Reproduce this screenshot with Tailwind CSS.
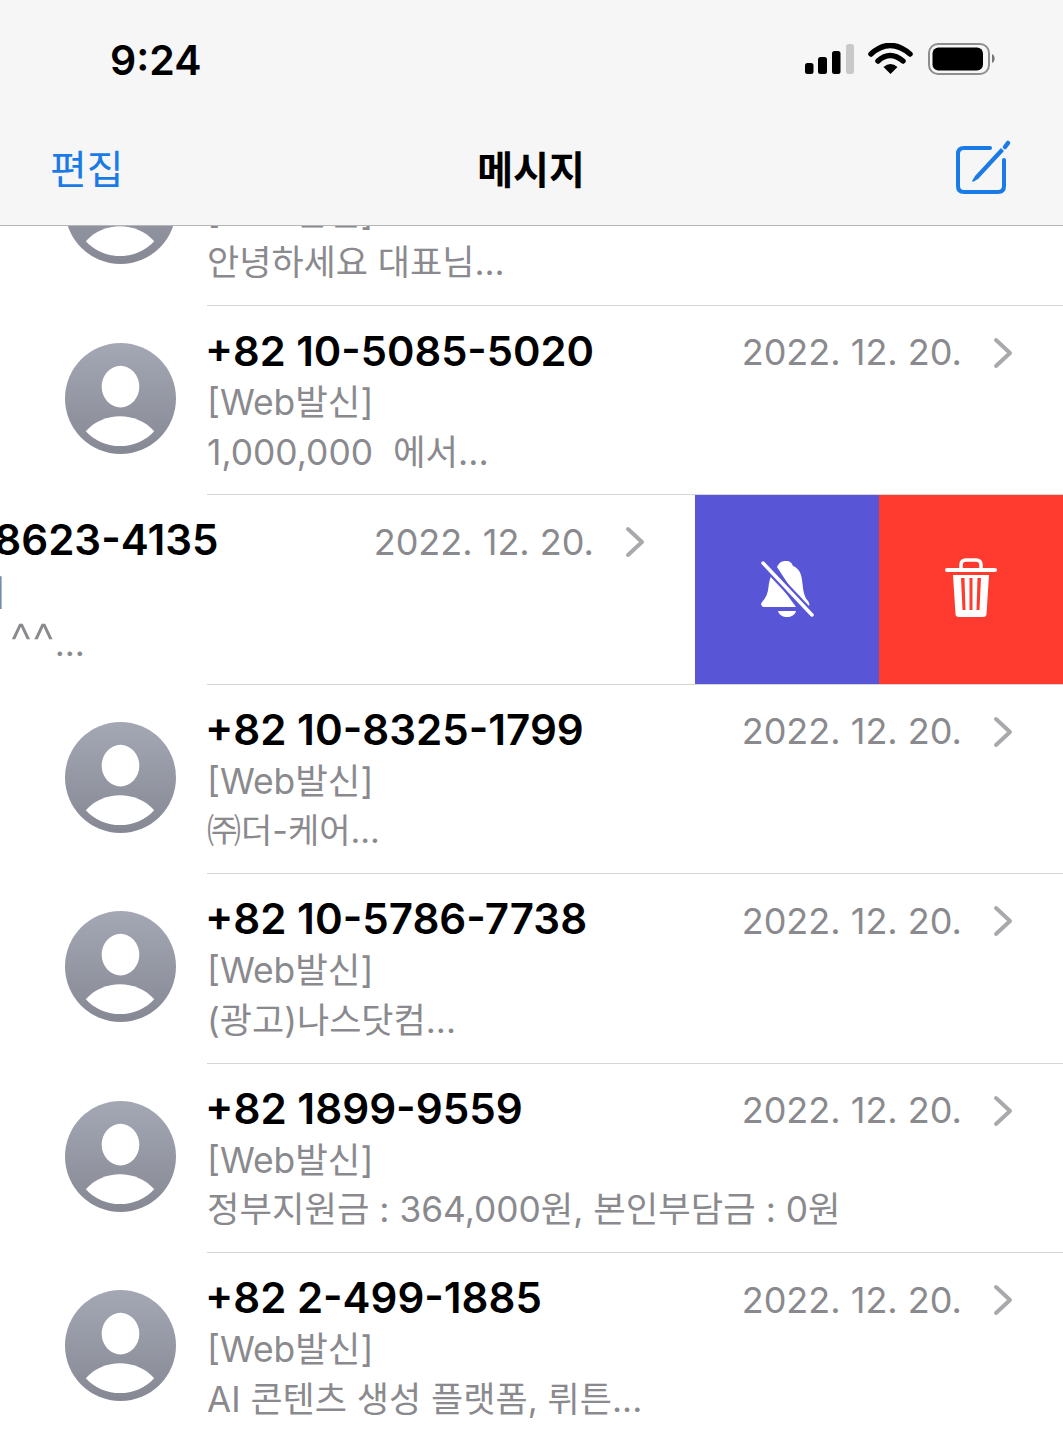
<!doctype html>
<html lang="ko">
  <head>
    <meta charset="UTF-8" />
    <title>메시지</title>
    <script src="https://cdn.jsdelivr.net/npm/@tailwindcss/browser@4"></script>
  </head>
  <body class="bg-white font-['Inter','Noto_Sans_CJK_KR',sans-serif] overflow-hidden">
    <div class="relative w-[1063px] h-[1440px] overflow-hidden">
      <!-- nav -->
      <header class="relative z-10 h-[226px] bg-[#f6f6f6] border-b border-[#b5b5b7]">
        <div class="flex items-start h-[114px] pl-[110px]">
          <span class="mt-[33px] text-[41px] leading-[54px] font-semibold text-black">9:24</span>
          <svg class="ml-auto mt-[43px] mr-[68px]" width="190" height="33" viewBox="0 0 190 33">
            <rect x="0" y="20" width="8.5" height="11" rx="2.5" fill="#000" />
            <rect x="13" y="14" width="9" height="17" rx="2.5" fill="#000" />
            <rect x="27" y="8" width="8.5" height="23" rx="2.5" fill="#000" />
            <rect x="41" y="1" width="8" height="30" rx="2.5" fill="#c9c9c9" />
            <path d="M66 11 Q85 -6 105 11" fill="none" stroke="#000" stroke-width="5.5" stroke-linecap="round" />
            <path d="M73 18 Q85 7 98 18" fill="none" stroke="#000" stroke-width="5.5" stroke-linecap="round" />
            <path d="M78.5 24 Q85.5 18 92.5 24 L85.5 31 Z" fill="#000" />
            <rect x="124" y="1" width="60" height="30" rx="9" fill="none" stroke="#8e8e8e" stroke-width="2" />
            <rect x="127.5" y="4.5" width="50.5" height="23" rx="6" fill="#000" />
            <path d="M187 11 C190.5 12 190.5 19 187 20 Z" fill="#777779" />
          </svg>
        </div>
        <div class="flex items-center h-[111px] pl-[50px] pr-[50px]">
          <span class="w-[200px] text-[40px] leading-[50px] text-[#1a7ae6]">편집</span>
          <span class="flex-1 pr-[39px] text-center text-[39px] leading-[50px] font-semibold text-black">메시지</span>
          <svg class="w-[200px] -mt-[2px] -mr-[38px]" width="200" height="60" viewBox="0 0 200 60">
            <path d="M139 9 H113 Q107 9 107 15 V47 Q107 53 113 53 H147 Q153 53 153 47 V21" fill="none" stroke="#1a7ae6" stroke-width="4" stroke-linecap="round" />
            <path d="M125 37 L122 42 L127 39 L152 12 L150 10 Z" fill="#1a7ae6" stroke="#1a7ae6" stroke-width="1.5" stroke-linejoin="round" />
            <path d="M154 8 L157 4" stroke="#1a7ae6" stroke-width="4.5" stroke-linecap="round" />
          </svg>
        </div>
      </header>

      <main class="-mt-[110.5px]">
        <!-- row 0 -->
        <section class="flex h-[189px] pl-[65px]">
          <svg class="mt-[37px] shrink-0" width="111" height="111" viewBox="0 0 112 112">
            <defs>
              <linearGradient id="av" x1="0" y1="0" x2="0" y2="1">
                <stop offset="0" stop-color="#a4a8b4" />
                <stop offset="1" stop-color="#868994" />
              </linearGradient>
            </defs>
            <circle cx="56" cy="56" r="56" fill="url(#av)" />
            <ellipse cx="56" cy="44" rx="19" ry="21" fill="#fff" />
            <path d="M21 89 C30 79 43 74 55.5 74 C68 74 81 79 90 89 C81 99 68 104 55.5 104 C43 104 30 99 21 89 Z" fill="#fff" />
          </svg>
          <div class="ml-[31px] flex-1 pt-[19px]">
            <div class="h-[52px]"></div>
            <p class="h-[50px] pt-px text-[35.4px] leading-[50px] text-[#8a8a8e]">[Web발신]</p>
            <p class="h-[50px] text-[35px] leading-[50px] text-[#8a8a8e]">안녕하세요 대표님...</p>
          </div>
        </section>
        <div class="ml-[207px] h-px bg-[#d6d6d8]"></div>

        <!-- row 1 -->
        <section class="flex h-[188.5px] pl-[65px]">
          <svg class="mt-[37px] shrink-0" width="111" height="111" viewBox="0 0 112 112">
            <circle cx="56" cy="56" r="56" fill="url(#av)" />
            <ellipse cx="56" cy="44" rx="19" ry="21" fill="#fff" />
            <path d="M21 89 C30 79 43 74 55.5 74 C68 74 81 79 90 89 C81 99 68 104 55.5 104 C43 104 30 99 21 89 Z" fill="#fff" />
          </svg>
          <div class="ml-[31px] flex-1 pt-[19px]">
            <div class="flex items-center h-[52px]">
              <h2 class="flex-1 -ml-[2px] text-[41.7px] leading-[50px] font-semibold text-black">+82 10-5085-5020</h2>
              <time class="mt-[3px] text-[36px] text-[#8a8a8e]">2022. 12. 20.</time>
              <svg class="mt-[4px] ml-[31px] mr-[49px]" width="21" height="32" viewBox="0 0 21 32"><path d="M3 3 L17 16 L3 29" fill="none" stroke="#a9a9ad" stroke-width="4" stroke-linecap="round" stroke-linejoin="round" /></svg>
            </div>
            <p class="h-[50px] pt-px text-[35.4px] leading-[50px] text-[#8a8a8e]">[Web발신]</p>
            <p class="h-[50px] pt-px text-[35.4px] leading-[50px] text-[#8a8a8e]">1,000,000&nbsp; 에서...</p>
          </div>
        </section>
        <div class="ml-[207px] h-px bg-[#d6d6d8]"></div>

        <!-- row 2: swiped open -->
        <section class="h-[188.5px] overflow-hidden">
          <div class="flex w-[1431px] h-full -ml-[368px]">
            <div class="flex w-[1063px] pl-[65px]">
              <svg class="mt-[37px] shrink-0" width="111" height="111" viewBox="0 0 112 112">
                <circle cx="56" cy="56" r="56" fill="url(#av)" />
                <ellipse cx="56" cy="44" rx="19" ry="21" fill="#fff" />
                <path d="M21 89 C30 79 43 74 55.5 74 C68 74 81 79 90 89 C81 99 68 104 55.5 104 C43 104 30 99 21 89 Z" fill="#fff" />
              </svg>
              <div class="ml-[31px] flex-1 pt-[19px]">
                <div class="flex items-center h-[52px]">
                  <h2 class="flex-1 -ml-[2px] text-[42.1px] leading-[52px] font-semibold text-black">+82 10-8623-4135</h2>
                  <time class="mt-[3px] text-[36px] text-[#8a8a8e]">2022. 12. 20.</time>
                  <svg class="mt-[4px] ml-[31px] mr-[49px]" width="21" height="32" viewBox="0 0 21 32"><path d="M3 3 L17 16 L3 29" fill="none" stroke="#a9a9ad" stroke-width="4" stroke-linecap="round" stroke-linejoin="round" /></svg>
                </div>
                <p class="h-[50px] pt-px text-[35.4px] leading-[50px] text-[#8a8a8e]">[Web발신]</p>
                <p class="h-[50px] text-[35px] leading-[50px] text-[#8a8a8e]">안녕하세요 <span class="text-[50px] leading-none font-light align-[-3px]">^^</span>...</p>
              </div>
            </div>
            <div class="flex items-center justify-center w-[184px] bg-[#5856d6]">
              <svg width="54" height="58" viewBox="0 0 54 58" fill="#fff">
                <path d="M26 1 C21 1 19 3 17 7 L32 30 L47 46 C50 47 50 44 48 41 C43 36 43 26 42 20 C41 12 38 8 33 6 C32 3 30 1 26 1 Z" />
                <path d="M12 14 C10 18 9 22 8.5 27 C8 33 6 38 2 42 C0 45 2 47 4 47 L36 47 Z" />
                <path d="M18 51 H36 C35 55 31 57 27 57 C23 57 19 55 18 51 Z" />
                <path d="M3 3 L52 55" stroke="#5856d6" stroke-width="8" />
                <path d="M3 3 L52 55" stroke="#fff" stroke-width="3.5" stroke-linecap="round" />
              </svg>
            </div>
            <div class="flex items-center justify-center w-[184px] bg-[#ff3b30]">
              <svg class="-mt-[3px]" width="54" height="60" viewBox="0 0 54 60" fill="#fff">
                <path d="M17 12 V7 Q17 2 22 2 H32 Q37 2 37 7 V12" fill="none" stroke="#fff" stroke-width="3.5" />
                <rect x="1" y="10" width="52" height="4" rx="2" />
                <path fill-rule="evenodd" d="M9 17 H45 L42.5 56 Q42.3 59 39 59 H15 Q11.7 59 11.5 56 Z M17 20 L18.5 52 H21.5 L20.5 20 Z M25.5 20 V52 H28.5 V20 Z M33.5 20 L32.5 52 H35.5 L37 20 Z" />
              </svg>
            </div>
          </div>
        </section>
        <div class="ml-[207px] h-px bg-[#d6d6d8]"></div>

        <!-- row 3 -->
        <section class="flex h-[188.5px] pl-[65px]">
          <svg class="mt-[37px] shrink-0" width="111" height="111" viewBox="0 0 112 112">
            <circle cx="56" cy="56" r="56" fill="url(#av)" />
            <ellipse cx="56" cy="44" rx="19" ry="21" fill="#fff" />
            <path d="M21 89 C30 79 43 74 55.5 74 C68 74 81 79 90 89 C81 99 68 104 55.5 104 C43 104 30 99 21 89 Z" fill="#fff" />
          </svg>
          <div class="ml-[31px] flex-1 pt-[19px]">
            <div class="flex items-center h-[52px]">
              <h2 class="flex-1 -ml-[2px] text-[42.1px] leading-[52px] font-semibold text-black">+82 10-8325-1799</h2>
              <time class="mt-[3px] text-[36px] text-[#8a8a8e]">2022. 12. 20.</time>
              <svg class="mt-[4px] ml-[31px] mr-[49px]" width="21" height="32" viewBox="0 0 21 32"><path d="M3 3 L17 16 L3 29" fill="none" stroke="#a9a9ad" stroke-width="4" stroke-linecap="round" stroke-linejoin="round" /></svg>
            </div>
            <p class="h-[50px] pt-px text-[35.4px] leading-[50px] text-[#8a8a8e]">[Web발신]</p>
            <p class="h-[50px] text-[34px] leading-[50px] text-[#8a8a8e]">㈜더-케어...</p>
          </div>
        </section>
        <div class="ml-[207px] h-px bg-[#d6d6d8]"></div>

        <!-- row 4 -->
        <section class="flex h-[188.5px] pl-[65px]">
          <svg class="mt-[37px] shrink-0" width="111" height="111" viewBox="0 0 112 112">
            <circle cx="56" cy="56" r="56" fill="url(#av)" />
            <ellipse cx="56" cy="44" rx="19" ry="21" fill="#fff" />
            <path d="M21 89 C30 79 43 74 55.5 74 C68 74 81 79 90 89 C81 99 68 104 55.5 104 C43 104 30 99 21 89 Z" fill="#fff" />
          </svg>
          <div class="ml-[31px] flex-1 pt-[19px]">
            <div class="flex items-center h-[52px]">
              <h2 class="flex-1 -ml-[2px] text-[42.1px] leading-[52px] font-semibold text-black">+82 10-5786-7738</h2>
              <time class="mt-[3px] text-[36px] text-[#8a8a8e]">2022. 12. 20.</time>
              <svg class="mt-[4px] ml-[31px] mr-[49px]" width="21" height="32" viewBox="0 0 21 32"><path d="M3 3 L17 16 L3 29" fill="none" stroke="#a9a9ad" stroke-width="4" stroke-linecap="round" stroke-linejoin="round" /></svg>
            </div>
            <p class="h-[50px] pt-px text-[35.4px] leading-[50px] text-[#8a8a8e]">[Web발신]</p>
            <p class="h-[50px] text-[35px] leading-[50px] text-[#8a8a8e]">(광고)나스닷컴...</p>
          </div>
        </section>
        <div class="ml-[207px] h-px bg-[#d6d6d8]"></div>

        <!-- row 5 -->
        <section class="flex h-[188.5px] pl-[65px]">
          <svg class="mt-[37px] shrink-0" width="111" height="111" viewBox="0 0 112 112">
            <circle cx="56" cy="56" r="56" fill="url(#av)" />
            <ellipse cx="56" cy="44" rx="19" ry="21" fill="#fff" />
            <path d="M21 89 C30 79 43 74 55.5 74 C68 74 81 79 90 89 C81 99 68 104 55.5 104 C43 104 30 99 21 89 Z" fill="#fff" />
          </svg>
          <div class="ml-[31px] flex-1 pt-[19px]">
            <div class="flex items-center h-[52px]">
              <h2 class="flex-1 -ml-[2px] text-[42.2px] leading-[52px] font-semibold text-black">+82 1899-9559</h2>
              <time class="mt-[3px] text-[36px] text-[#8a8a8e]">2022. 12. 20.</time>
              <svg class="mt-[4px] ml-[31px] mr-[49px]" width="21" height="32" viewBox="0 0 21 32"><path d="M3 3 L17 16 L3 29" fill="none" stroke="#a9a9ad" stroke-width="4" stroke-linecap="round" stroke-linejoin="round" /></svg>
            </div>
            <p class="h-[50px] pt-px text-[35.4px] leading-[50px] text-[#8a8a8e]">[Web발신]</p>
            <p class="h-[50px] text-[35.3px] leading-[50px] text-[#8a8a8e]">정부지원금 : 364,000원, 본인부담금 : 0원</p>
          </div>
        </section>
        <div class="ml-[207px] h-px bg-[#d6d6d8]"></div>

        <!-- row 6 -->
        <section class="flex h-[188.5px] pl-[65px]">
          <svg class="mt-[37px] shrink-0" width="111" height="111" viewBox="0 0 112 112">
            <circle cx="56" cy="56" r="56" fill="url(#av)" />
            <ellipse cx="56" cy="44" rx="19" ry="21" fill="#fff" />
            <path d="M21 89 C30 79 43 74 55.5 74 C68 74 81 79 90 89 C81 99 68 104 55.5 104 C43 104 30 99 21 89 Z" fill="#fff" />
          </svg>
          <div class="ml-[31px] flex-1 pt-[19px]">
            <div class="flex items-center h-[52px]">
              <h2 class="flex-1 -ml-[2px] text-[42px] leading-[52px] font-semibold text-black">+82 2-499-1885</h2>
              <time class="mt-[3px] text-[36px] text-[#8a8a8e]">2022. 12. 20.</time>
              <svg class="mt-[4px] ml-[31px] mr-[49px]" width="21" height="32" viewBox="0 0 21 32"><path d="M3 3 L17 16 L3 29" fill="none" stroke="#a9a9ad" stroke-width="4" stroke-linecap="round" stroke-linejoin="round" /></svg>
            </div>
            <p class="h-[50px] pt-px text-[35.4px] leading-[50px] text-[#8a8a8e]">[Web발신]</p>
            <p class="h-[50px] text-[35px] leading-[50px] text-[#8a8a8e]">AI 콘텐츠 생성 플랫폼, 뤼튼...</p>
          </div>
        </section>
      </main>
    </div>
  </body>
</html>
